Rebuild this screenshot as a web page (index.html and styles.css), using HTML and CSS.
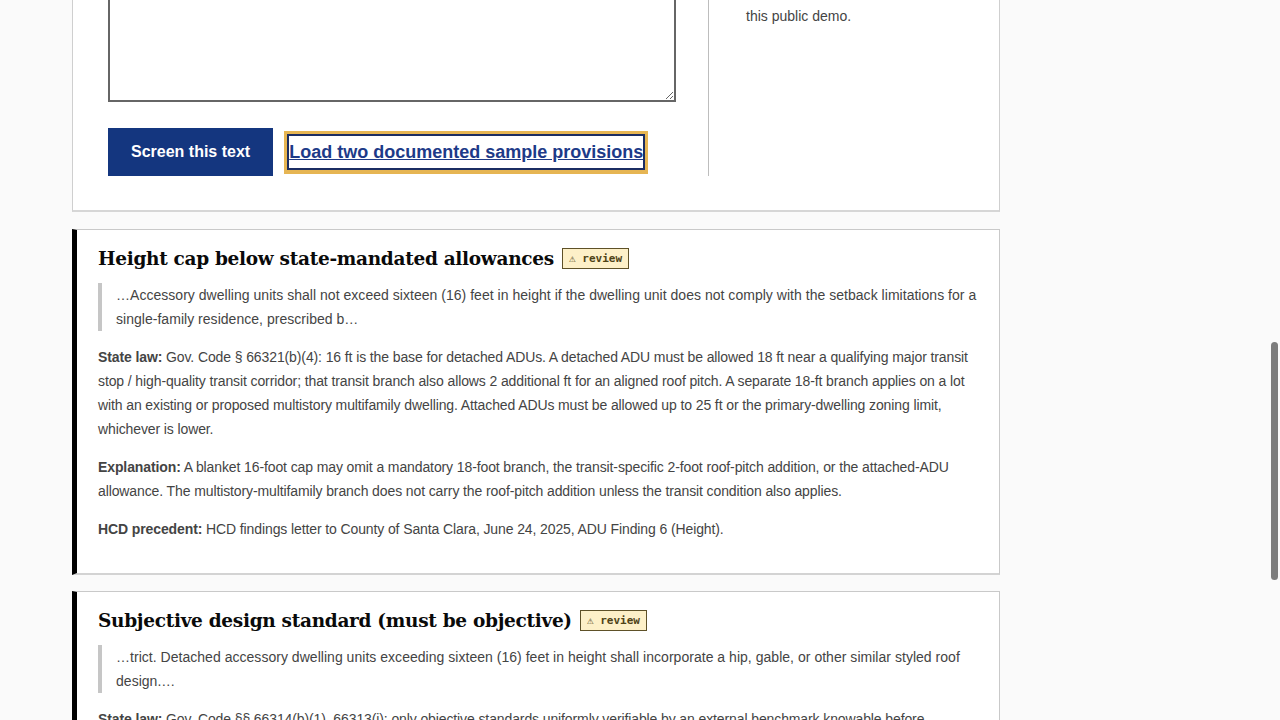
FILE: index.html
```html
<!DOCTYPE html>
<html lang="en">
<head>
<meta charset="utf-8">
<title>ADU ordinance screener</title>
<link rel="stylesheet" href="styles.css">
</head>
<body>
<main class="page">
  <section class="panel input-panel">
    <div class="input-col">
      <textarea class="source" aria-label="Ordinance text"></textarea>
      <div class="actions">
        <button class="btn-primary" type="button">Screen this text</button>
        <a class="sample-link" href="#">Load two documented sample provisions</a>
      </div>
    </div>
    <aside class="side-col">
      <p class="side-note">Screening is heuristic and is not legal advice. Pasted text is never stored by<br>this public demo.</p>
    </aside>
  </section>

  <article class="finding">
    <h3 class="finding-title">Height cap below state-mandated allowances <span class="badge">⚠ review</span></h3>
    <blockquote class="excerpt">…Accessory dwelling units shall not exceed sixteen (16) feet in height if the dwelling unit does not comply with the setback limitations for a single-family residence, prescribed b…</blockquote>
    <p class="detail"><b>State law:</b> Gov. Code § 66321(b)(4): 16 ft is the base for detached ADUs. A detached ADU must be allowed 18 ft near a qualifying major transit stop / high-quality transit corridor; that transit branch also allows 2 additional ft for an aligned roof pitch. A separate 18-ft branch applies on a lot with an existing or proposed multistory multifamily dwelling. Attached ADUs must be allowed up to 25 ft or the primary-dwelling zoning limit, whichever is lower.</p>
    <p class="detail"><b>Explanation:</b> A blanket 16-foot cap may omit a mandatory 18-foot branch, the transit-specific 2-foot roof-pitch addition, or the attached-ADU allowance. The multistory-multifamily branch does not carry the roof-pitch addition unless the transit condition also applies.</p>
    <p class="detail"><b>HCD precedent:</b> HCD findings letter to County of Santa Clara, June 24, 2025, ADU Finding 6 (Height).</p>
  </article>

  <article class="finding">
    <h3 class="finding-title">Subjective design standard (must be objective) <span class="badge">⚠ review</span></h3>
    <blockquote class="excerpt">…trict. Detached accessory dwelling units exceeding sixteen (16) feet in height shall incorporate a hip, gable, or other similar styled roof design.…</blockquote>
    <p class="detail"><b>State law:</b> Gov. Code §§ 66314(b)(1), 66313(i): only objective standards uniformly verifiable by an external benchmark knowable before submittal may be applied to ADUs.</p>
    <p class="detail"><b>Explanation:</b> “Other similar styled roof design” requires discretionary judgment and is not an objective standard.</p>
  </article>
</main>
<div class="scroll-thumb" aria-hidden="true"></div>
</body>
</html>
```
FILE: styles.css
```css
html, body {
  margin: 0;
  padding: 0;
  background: #fafafa;
  overflow: hidden;
  height: 100%;
}

body {
  font-family: "Liberation Sans", Arial, sans-serif;
  color: #444;
  font-size: 14px;
}

.page {
  width: 928px;
  margin-left: 72px;
  display: flex;
  flex-direction: column;
  gap: 16px;
}

.panel {
  background: #fff;
  border: 1px solid #cfcfcf;
  border-bottom: 2px solid #d6d6d6;
}

.input-panel {
  margin-top: -135px;
  margin-bottom: 1px;
  padding: 36px 35px 34px;
  display: grid;
  grid-template-columns: 568px 1fr;
  column-gap: 32px;
}

.input-col {
  display: flex;
  flex-direction: column;
}

.source {
  box-sizing: border-box;
  width: 568px;
  height: 200px;
  border: 2px solid #666;
  border-radius: 0;
  margin: 0;
  resize: vertical;
  background: #fff;
}

.actions {
  margin-top: 26px;
  display: flex;
  align-items: center;
  gap: 11px;
}

.btn-primary {
  height: 48px;
  padding: 0 23px;
  border: 0;
  background: #14367f;
  color: #fff;
  font-family: "Liberation Sans", Arial, sans-serif;
  font-weight: bold;
  font-size: 16px;
}

.sample-link {
  display: block;
  border: 3px solid #e6b553;
  border-bottom-width: 4px;
  box-shadow: inset 0 0 0 2px #1b2d63;
  padding: 6px 2px 6px 2px;
  font-size: 18px;
  font-weight: bold;
  color: #1d3a88;
  text-decoration: underline;
  line-height: 24px;
}

.side-col {
  border-left: 1px solid #bdbdbd;
  padding-left: 37px;
}

.side-note {
  margin: 30px 0 0;
  line-height: 24px;
  font-size: 14px;
  color: #444;
}

.finding {
  background: #fff;
  border: 1px solid #c9c9c9;
  border-bottom: 2px solid #d3d3d3;
  border-left: 5px solid #000;
  padding: 12px 20px 32px 21px;
}

.finding-title {
  margin: 0 0 7px;
  font-family: "DejaVu Serif", Georgia, serif;
  font-weight: bold;
  font-size: 18.5px;
  letter-spacing: -0.3px;
  line-height: 34px;
  color: #0a0a0a;
}

.badge {
  display: inline-block;
  vertical-align: 3px;
  margin-left: 2px;
  padding: 0 6px;
  height: 19px;
  line-height: 19px;
  letter-spacing: 0;
  background: #fdf0c8;
  border: 1px solid #5e5128;
  font-family: "DejaVu Sans Mono", monospace;
  font-size: 11px;
  font-weight: bold;
  color: #4f4317;
}

.excerpt {
  margin: 0 0 3px;
  padding-left: 14px;
  border-left: 4px solid #c6c6c6;
  line-height: 24px;
  color: #444;
  letter-spacing: 0.03px;
}

.detail {
  margin: 14px 0 0;
  line-height: 24px;
  letter-spacing: -0.11px;
}

.detail b {
  color: #444;
}

.scroll-thumb {
  position: fixed;
  right: 2px;
  top: 342px;
  width: 7px;
  height: 238px;
  border-radius: 4px;
  background: #7d7d7d;
}
```
